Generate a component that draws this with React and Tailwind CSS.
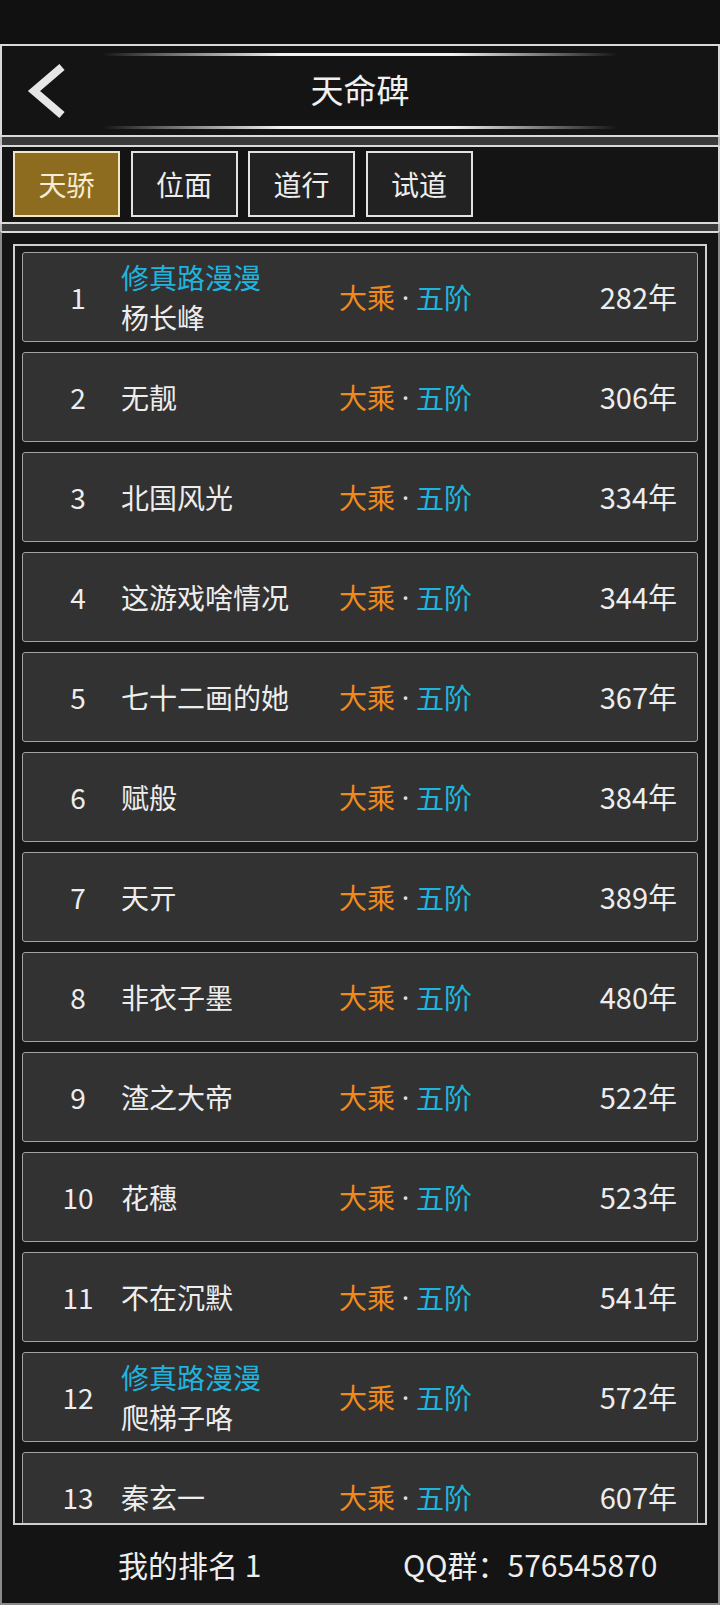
import React, { useState } from 'react'

const players = [
    { rank: 1, group: '修真路漫漫', name: '杨长峰', years: 282 },
    { rank: 2, name: '无靓', years: 306 },
    { rank: 3, name: '北国风光', years: 334 },
    { rank: 4, name: '这游戏啥情况', years: 344 },
    { rank: 5, name: '七十二画的她', years: 367 },
    { rank: 6, name: '赋般', years: 384 },
    { rank: 7, name: '天亓', years: 389 },
    { rank: 8, name: '非衣子墨', years: 480 },
    { rank: 9, name: '渣之大帝', years: 522 },
    { rank: 10, name: '花穗', years: 523 },
    { rank: 11, name: '不在沉默', years: 541 },
    { rank: 12, group: '修真路漫漫', name: '爬梯子咯', years: 572 },
    { rank: 13, name: '秦玄一', years: 607 },
]

const tabs = ['天骄', '位面', '道行', '试道']

function BackArrow() {
    return (
        <svg width="42" height="56" viewBox="0 0 42 56" fill="none">
            <polyline
                points="36,4 8,28 36,52"
                stroke="#e6e6e6"
                strokeWidth="8"
                strokeLinecap="butt"
                strokeLinejoin="miter"
            />
        </svg>
    )
}

function GlowLine() {
    return (
        <div className="h-[3px] w-[516px] bg-[linear-gradient(90deg,transparent,#666_12%,#f2f2f2_35%,#f2f2f2_68%,#666_88%,transparent)]" />
    )
}

function Row({ item }) {
    return (
        <div className="h-[90px] shrink-0 flex items-center bg-[#323232] border border-[#a3a3a3] rounded-[3px] text-[28px] text-[#ededed]">
            {/* rank */}
            <div className="ml-[12px] w-[86px] text-center">{item.rank}</div>

            {/* name */}
            <div className="w-[218px] flex flex-col leading-[40px]">
                {item.group && <span className="text-[#1fb4de]">{item.group}</span>}
                <span>{item.name}</span>
            </div>

            {/* realm */}
            <div className="flex items-center">
                <span className="text-[#f08a1b]">大乘</span>
                <span className="w-[21px] text-center text-[#e0e0e0] font-['Noto_Sans',sans-serif]">·</span>
                <span className="text-[#1fb4de]">五阶</span>
            </div>

            {/* years */}
            <div className="ml-auto pr-[20px] text-[29px]">{item.years}年</div>
        </div>
    )
}

export default function App() {
    const [active, setActive] = useState(0)

    return (
        <div className="w-[720px] h-[1605px] bg-[#121212] flex flex-col overflow-hidden font-['Noto_Sans_CJK_SC','Noto_Sans',sans-serif]">
            {/* status bar */}
            <div className="h-[44px] shrink-0 bg-[#111111]" />

            {/* header */}
            <div className="h-[93px] shrink-0 border-2 border-[#dadada] bg-[#141414] flex flex-col items-center">
                <div className="mt-[7px]">
                    <GlowLine />
                </div>
                <div className="h-[70px] w-full grid grid-cols-[1fr_auto_1fr] items-center">
                    <div className="pl-[24px] flex items-center">
                        <BackArrow />
                    </div>
                    <h1 className="text-[33px] text-[#f0f0f0] leading-none pb-[4px]">天命碑</h1>
                    <div />
                </div>
                <GlowLine />
            </div>

            <div className="h-[8px] shrink-0 bg-[#3a3a3a] border-x-2 border-[#bdbdbd]" />

            {/* tabs */}
            <div className="h-[79px] shrink-0 border-2 border-[#dadada] bg-[#141414] flex items-center gap-[10.5px] pl-[11px] pb-[2px]">
                {tabs.map((tab, index) => (
                    <button
                        key={tab}
                        onClick={() => setActive(index)}
                        className={`w-[107px] h-[66px] border-2 text-[28px] leading-none ${active === index
                            ? 'bg-[#8d6c20] border-[#f2e6c4] text-[#f7ecd2]'
                            : 'bg-[#222222] border-[#e2e2e2] text-[#ededed]'}`}
                    >
                        {tab}
                    </button>
                ))}
            </div>

            <div className="h-[7px] shrink-0 bg-[#3a3a3a] border-x-2 border-[#bdbdbd]" />

            {/* list + footer */}
            <div className="flex-1 flex flex-col border-2 border-t-[#dadada] border-x-[#8a8a8a] border-b-[#8a8a8a] bg-[#141414]">
                <div className="mt-[11px] mx-[11px] h-[1281px] shrink-0 border-2 border-[#cfcfcf] bg-[#181818] overflow-hidden">
                    <div className="flex flex-col gap-[10px] pt-[6px] px-[7px]">
                        {players.map(item => (
                            <Row key={item.rank} item={item} />
                        ))}
                    </div>
                </div>

                <div className="flex-1 flex items-center text-[30px] text-[#ededed]">
                    <span className="ml-[116px] w-[285px]">我的排名 1</span>
                    <span>QQ群：576545870</span>
                </div>
            </div>
        </div>
    )
}
